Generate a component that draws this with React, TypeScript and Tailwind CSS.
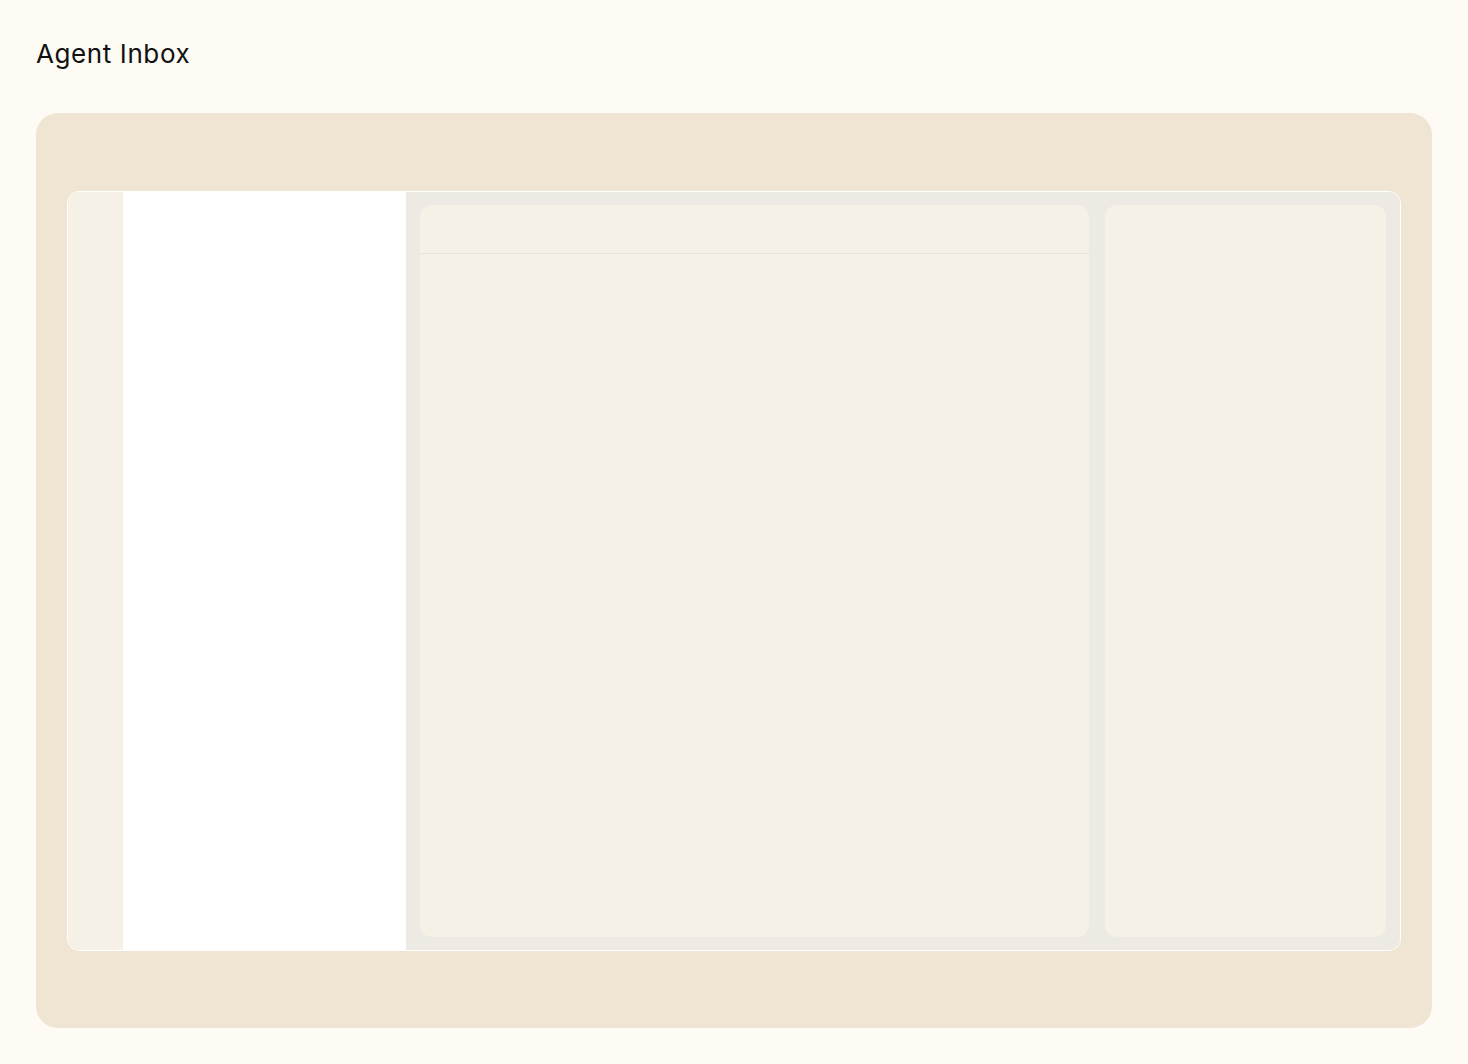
export default function App() {
  return (
    <div className="min-h-screen bg-[#fefaf4] px-9 pt-[34px] pb-9 font-['Inter',sans-serif]">
      <h1 className="text-[26px] leading-[40px] font-normal tracking-[0.6px] text-[#111]">Agent Inbox</h1>
      <div className="mt-[39px] h-[915px] rounded-[22px] bg-[#f0e4d3] pl-[31px] pt-[78px] pb-[77px] pr-[31px]">
        <div className="flex h-full overflow-hidden rounded-[12px] border border-white">
          <div className="w-[55px] bg-[#f5f1e7]" />
          <div className="w-[283px] bg-white" />
          <div className="flex flex-1 gap-4 bg-[#edeae3] px-[14px] pt-[13px] pb-[13px]">
            <div className="flex flex-1 flex-col rounded-[12px] bg-[#f5f1e6]">
              <div className="h-[49px] border-b border-[#ebe5d9]" />
            </div>
            <div className="w-[281px] rounded-[12px] bg-[#f5f1e6]" />
          </div>
        </div>
      </div>
    </div>
  );
}
